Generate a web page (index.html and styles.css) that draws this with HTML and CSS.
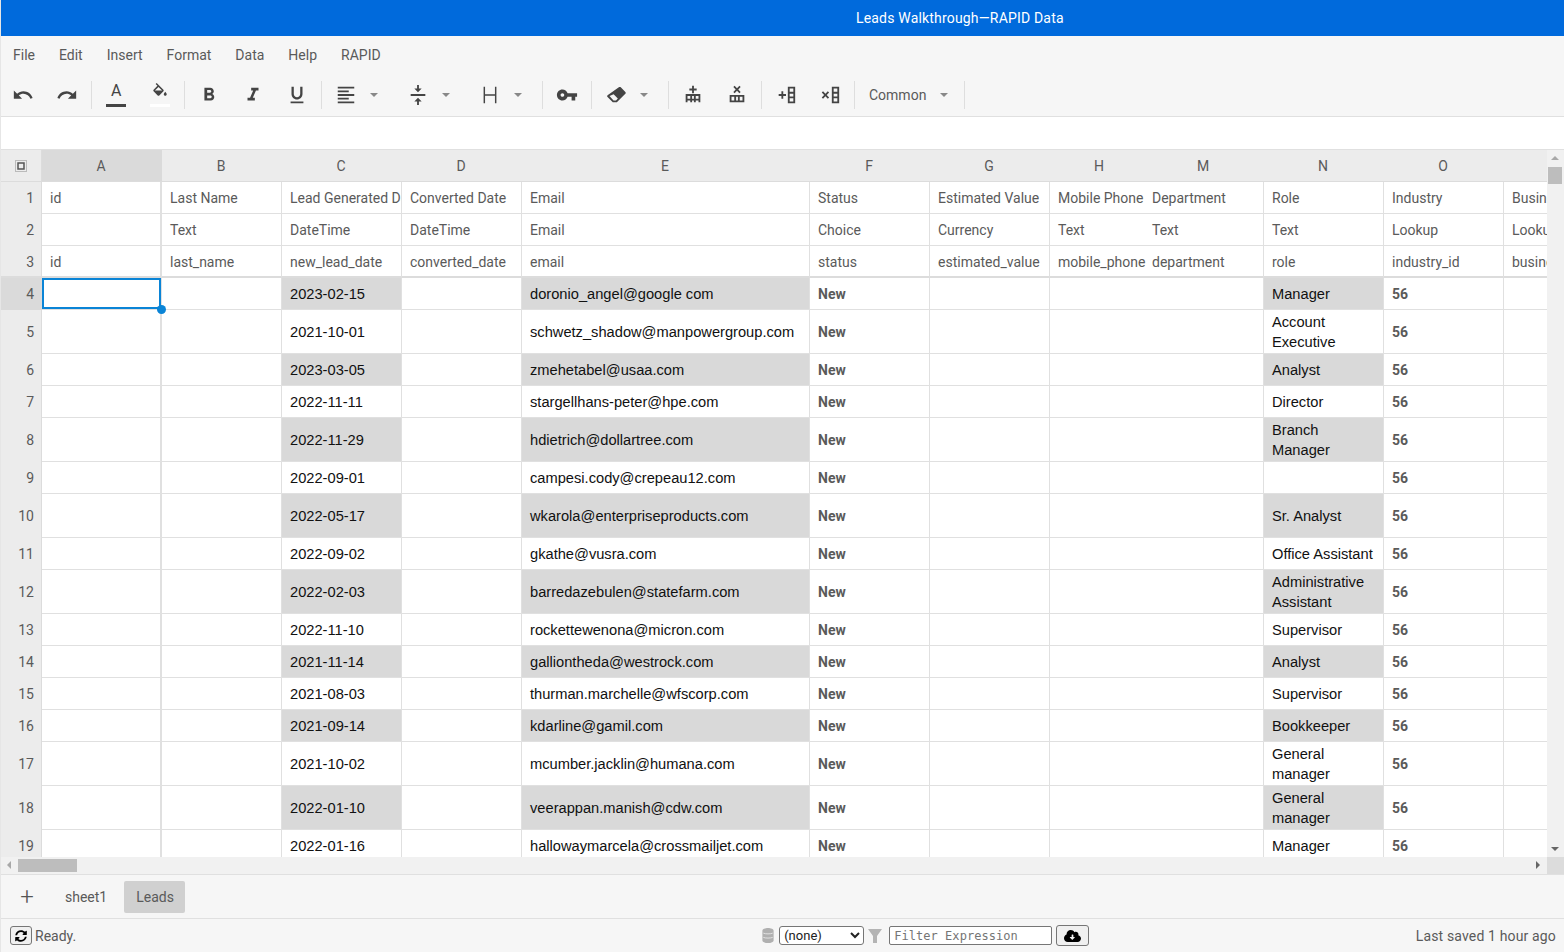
FILE: index.html
```html
<!DOCTYPE html>
<html lang="en">
<head>
  <meta charset="UTF-8">
  <title>Leads Walkthrough—RAPID Data</title>
  <link rel="stylesheet" href="styles.css">
</head>
<body>
  <div class="title-bar"><span class="title-text">Leads Walkthrough—RAPID Data</span></div>

  <div class="menu-bar">
    <span>File</span><span>Edit</span><span>Insert</span><span>Format</span><span>Data</span><span>Help</span><span>RAPID</span>
  </div>

  <div class="toolbar">
    <div class="tool"><svg viewBox="0 0 24 24"><path d="M12.5 8c-2.65 0-5.05.99-6.9 2.6L2 7v9h9l-3.62-3.62c1.39-1.16 3.16-1.88 5.12-1.88 3.54 0 6.55 2.31 7.6 5.5l2.37-.78C21.08 11.03 17.15 8 12.5 8z"/></svg></div>
    <div class="tool"><svg viewBox="0 0 24 24"><path d="M18.4 10.6C16.55 8.99 14.15 8 11.5 8c-4.65 0-8.58 3.03-9.96 7.22L3.9 16c1.05-3.19 4.05-5.5 7.6-5.5 1.95 0 3.73.72 5.12 1.88L13 16h9V7l-3.6 3.6z"/></svg></div>
    <div class="sep"></div>
    <div class="tool"><span class="color-a">A</span><span class="swatch dark"></span></div>
    <div class="tool"><svg class="fill-icon" viewBox="0 0 24 24"><path d="M16.56 8.94L7.62 0 6.21 1.41l2.38 2.38-5.15 5.15c-.59.59-.59 1.54 0 2.12l5.5 5.5c.29.29.68.44 1.06.44s.77-.15 1.06-.44l5.5-5.5c.59-.58.59-1.53 0-2.12zM5.21 10L10 5.21 14.79 10H5.21zM19 11.5s-2 2.17-2 3.5c0 1.1.9 2 2 2s2-.9 2-2c0-1.33-2-3.5-2-3.5z"/></svg><span class="swatch light"></span></div>
    <div class="sep"></div>
    <div class="tool"><svg viewBox="0 0 24 24"><path d="M15.6 10.79c.97-.67 1.65-1.77 1.65-2.79 0-2.26-1.75-4-4-4H7v14h7.04c2.09 0 3.71-1.7 3.71-3.79 0-1.52-.86-2.82-2.15-3.42zM10 6.5h3c.83 0 1.5.67 1.5 1.5s-.67 1.5-1.5 1.5h-3v-3zm3.5 9H10v-3h3.5c.83 0 1.5.67 1.5 1.5s-.67 1.5-1.5 1.5z"/></svg></div>
    <div class="tool"><svg viewBox="0 0 24 24"><path d="M10 4v3h2.21l-3.42 8H6v3h8v-3h-2.21l3.42-8H18V4z"/></svg></div>
    <div class="tool"><svg viewBox="0 0 24 24"><path d="M12 17c3.31 0 6-2.69 6-6V3h-2.5v8c0 1.93-1.57 3.5-3.5 3.5S8.5 12.93 8.5 11V3H6v8c0 3.31 2.69 6 6 6zm-7 2v2h14v-2H5z"/></svg></div>
    <div class="sep"></div>
    <div class="tool wide"><svg viewBox="0 0 24 24"><path d="M15 15H3v2h12v-2zm0-8H3v2h12V7zM3 13h18v-2H3v2zm0 8h18v-2H3v2zM3 3v2h18V3H3z"/></svg><i class="caret"></i></div>
    <div class="tool wide"><svg viewBox="0 0 24 24"><path d="M8 19h3v4h2v-4h3l-4-4-4 4zm8-14h-3V1h-2v4H8l4 4 4-4zM4 11v2h16v-2H4z"/></svg><i class="caret"></i></div>
    <div class="tool wide"><svg viewBox="0 0 24 24"><path d="M5 3h1.600v18H5zM17.400 3H19v18h-1.600zM6.600 11.200h10.800v1.600H6.600z"/></svg><i class="caret"></i></div>
    <div class="sep"></div>
    <div class="tool"><svg viewBox="0 0 24 24"><path d="M12.65 10C11.83 7.67 9.61 6 7 6c-3.31 0-6 2.69-6 6s2.69 6 6 6c2.61 0 4.83-1.67 5.65-4H17v4h4v-4h2v-4H12.65zM7 14c-1.1 0-2-.9-2-2s.9-2 2-2 2 .9 2 2-.9 2-2 2z"/></svg></div>
    <div class="sep"></div>
    <div class="tool wide"><svg viewBox="0 0 24 24"><path d="M15.1 3.6c.6-.6 1.5-.6 2.1 0l5 5c.6.6.6 1.5 0 2.1L12.9 20H8.5l-5.7-5.7c-.6-.6-.6-1.5 0-2.1L15.1 3.6zM4.900 13.200l4.400 4.700h2.700l2-2-4.600-4.600-4.500 1.900z"/></svg><i class="caret"></i></div>
    <div class="sep"></div>
    <div class="tool"><svg viewBox="0 0 24 24"><path d="M11 2h2v3h3v2h-3v3h-2V7H8V5h3zM4 11h16v9h-2v-2h-3v2h-2v-2h-2v2H9v-2H6v2H4zm2 2v3h3v-3zm5 0v3h2v-3zm4 0v3h3v-3z"/></svg></div>
    <div class="tool"><svg viewBox="0 0 24 24"><path d="M9.400 2L12 4.600 14.600 2 16 3.400 13.400 6 16 8.600 14.600 10 12 7.400 9.400 10 8 8.600 10.600 6 8 3.400zM4 12h16v8H4zm2 2v4h3v-4zm5 0v4h2v-4zm4 0v4h3v-4z"/></svg></div>
    <div class="sep"></div>
    <div class="tool"><svg viewBox="0 0 24 24"><path d="M4 11h3V8h2v3h3v2H9v3H7v-3H4zM14 3h8v18h-8zm2 2v3.500h4V5zm0 5.500v3h4v-3zm0 5V19h4v-3.500z"/></svg></div>
    <div class="tool"><svg viewBox="0 0 24 24"><path d="M4.400 8L7 10.600 9.600 8 11 9.400 8.400 12l2.600 2.600L9.600 16 7 13.400 4.400 16 3 14.600 5.600 12 3 9.400zM14 3h8v18h-8zm2 2v3.500h4V5zm0 5.500v3h4v-3zm0 5V19h4v-3.500z"/></svg></div>
    <div class="sep"></div>
    <div class="tool style-picker"><span>Common</span><i class="caret"></i></div>
    <div class="sep"></div>
  </div>

  <div class="formula-bar"></div>

  <div class="sheet-area">
    <div class="grid-wrap">
      <table class="grid">
        <colgroup>
          <col class="c-head"><col class="c-std"><col class="c-std"><col class="c-std"><col class="c-std"><col class="c-email"><col class="c-std"><col class="c-std"><col class="c-phone"><col class="c-std"><col class="c-std"><col class="c-std"><col class="c-std">
        </colgroup>
        <tr class="col-heads">
          <th class="corner"><svg viewBox="0 0 14 14"><rect x="1.500" y="1.500" width="11" height="11" fill="none" stroke="#8a8a8a" stroke-dasharray="1 1"/><rect x="4" y="4" width="6" height="6" fill="none" stroke="#555" stroke-width="1.500"/></svg></th>
          <th class="active-head">A</th><th>B</th><th>C</th><th>D</th><th>E</th><th>F</th><th>G</th><th class="nudge">H</th><th>M</th><th>N</th><th>O</th><th></th>
        </tr>
        <tr class="meta"><th>1</th><td class="thick">id</td><td>Last Name</td><td>Lead Generated Date</td><td>Converted Date</td><td>Email</td><td>Status</td><td>Estimated Value</td><td class="open">Mobile Phone</td><td>Department</td><td>Role</td><td>Industry</td><td>Business Unit</td></tr>
        <tr class="meta"><th>2</th><td class="thick"></td><td>Text</td><td>DateTime</td><td>DateTime</td><td>Email</td><td>Choice</td><td>Currency</td><td class="open">Text</td><td>Text</td><td>Text</td><td>Lookup</td><td>Lookup</td></tr>
        <tr class="meta last-meta"><th>3</th><td class="thick">id</td><td>last_name</td><td>new_lead_date</td><td>converted_date</td><td>email</td><td>status</td><td>estimated_value</td><td class="open">mobile_phone</td><td>department</td><td>role</td><td>industry_id</td><td>business_unit</td></tr>
        <tr class="alt"><th class="active-head">4</th><td class="thick"><div class="selected"><i class="handle"></i></div></td><td></td><td class="val sh">2023-02-15</td><td></td><td class="val sh">doronio_angel@google com</td><td class="tag">New</td><td></td><td class="open"></td><td></td><td class="val sh">Manager</td><td class="tag">56</td><td></td></tr>
        <tr class="tall"><th>5</th><td class="thick"></td><td></td><td class="val">2021-10-01</td><td></td><td class="val">schwetz_shadow@manpowergroup.com</td><td class="tag">New</td><td></td><td class="open"></td><td></td><td class="val wrap">Account Executive</td><td class="tag">56</td><td></td></tr>
        <tr><th>6</th><td class="thick"></td><td></td><td class="val sh">2023-03-05</td><td></td><td class="val sh">zmehetabel@usaa.com</td><td class="tag">New</td><td></td><td class="open"></td><td></td><td class="val sh">Analyst</td><td class="tag">56</td><td></td></tr>
        <tr><th>7</th><td class="thick"></td><td></td><td class="val">2022-11-11</td><td></td><td class="val">stargellhans-peter@hpe.com</td><td class="tag">New</td><td></td><td class="open"></td><td></td><td class="val">Director</td><td class="tag">56</td><td></td></tr>
        <tr class="tall"><th>8</th><td class="thick"></td><td></td><td class="val sh">2022-11-29</td><td></td><td class="val sh">hdietrich@dollartree.com</td><td class="tag">New</td><td></td><td class="open"></td><td></td><td class="val sh wrap">Branch Manager</td><td class="tag">56</td><td></td></tr>
        <tr><th>9</th><td class="thick"></td><td></td><td class="val">2022-09-01</td><td></td><td class="val">campesi.cody@crepeau12.com</td><td class="tag">New</td><td></td><td class="open"></td><td></td><td class="val"></td><td class="tag">56</td><td></td></tr>
        <tr class="tall"><th>10</th><td class="thick"></td><td></td><td class="val sh">2022-05-17</td><td></td><td class="val sh">wkarola@enterpriseproducts.com</td><td class="tag">New</td><td></td><td class="open"></td><td></td><td class="val sh">Sr. Analyst</td><td class="tag">56</td><td></td></tr>
        <tr><th>11</th><td class="thick"></td><td></td><td class="val">2022-09-02</td><td></td><td class="val">gkathe@vusra.com</td><td class="tag">New</td><td></td><td class="open"></td><td></td><td class="val">Office Assistant</td><td class="tag">56</td><td></td></tr>
        <tr class="tall"><th>12</th><td class="thick"></td><td></td><td class="val sh">2022-02-03</td><td></td><td class="val sh">barredazebulen@statefarm.com</td><td class="tag">New</td><td></td><td class="open"></td><td></td><td class="val sh wrap">Administrative Assistant</td><td class="tag">56</td><td></td></tr>
        <tr><th>13</th><td class="thick"></td><td></td><td class="val">2022-11-10</td><td></td><td class="val">rockettewenona@micron.com</td><td class="tag">New</td><td></td><td class="open"></td><td></td><td class="val">Supervisor</td><td class="tag">56</td><td></td></tr>
        <tr><th>14</th><td class="thick"></td><td></td><td class="val sh">2021-11-14</td><td></td><td class="val sh">galliontheda@westrock.com</td><td class="tag">New</td><td></td><td class="open"></td><td></td><td class="val sh">Analyst</td><td class="tag">56</td><td></td></tr>
        <tr><th>15</th><td class="thick"></td><td></td><td class="val">2021-08-03</td><td></td><td class="val">thurman.marchelle@wfscorp.com</td><td class="tag">New</td><td></td><td class="open"></td><td></td><td class="val">Supervisor</td><td class="tag">56</td><td></td></tr>
        <tr><th>16</th><td class="thick"></td><td></td><td class="val sh">2021-09-14</td><td></td><td class="val sh">kdarline@gamil.com</td><td class="tag">New</td><td></td><td class="open"></td><td></td><td class="val sh">Bookkeeper</td><td class="tag">56</td><td></td></tr>
        <tr class="tall"><th>17</th><td class="thick"></td><td></td><td class="val">2021-10-02</td><td></td><td class="val">mcumber.jacklin@humana.com</td><td class="tag">New</td><td></td><td class="open"></td><td></td><td class="val wrap">General manager</td><td class="tag">56</td><td></td></tr>
        <tr class="tall"><th>18</th><td class="thick"></td><td></td><td class="val sh">2022-01-10</td><td></td><td class="val sh">veerappan.manish@cdw.com</td><td class="tag">New</td><td></td><td class="open"></td><td></td><td class="val sh wrap">General manager</td><td class="tag">56</td><td></td></tr>
        <tr><th>19</th><td class="thick"></td><td></td><td class="val">2022-01-16</td><td></td><td class="val">hallowaymarcela@crossmailjet.com</td><td class="tag">New</td><td></td><td class="open"></td><td></td><td class="val">Manager</td><td class="tag">56</td><td></td></tr>
      </table>
      <div class="vscroll">
        <i class="arrow up"></i>
        <div class="vthumb"></div>
        <i class="arrow down"></i>
      </div>
    </div>
    <div class="hscroll">
      <i class="arrow left"></i>
      <div class="hthumb"></div>
      <i class="arrow right"></i>
      <div class="scroll-corner"></div>
    </div>
  </div>

  <div class="tab-bar">
    <span class="add-tab">+</span>
    <span class="tab">sheet1</span>
    <span class="tab active">Leads</span>
  </div>

  <div class="status-bar">
    <button class="refresh"><svg viewBox="0 0 512 512"><path d="M370.700 133.300C339.500 104 298.900 88 255.800 88c-77.500.1-144.300 53.200-162.800 126.900-1.300 5.400-6.100 9.200-11.700 9.200H24.100c-7.500 0-13.200-6.800-11.800-14.200C33.900 94.900 134.800 8 256 8c66.400 0 126.800 26.100 171.300 68.700L463 41c15.100-15.100 41-4.400 41 17v134c0 13.300-10.700 24-24 24H346c-21.400 0-32.100-25.900-17-41l41.700-41.700zM32 296h134c21.400 0 32.100 25.900 17 41l-41.700 41.700c31.200 29.300 71.800 45.300 114.900 45.300 77.400-.1 144.300-53.100 162.800-126.800 1.300-5.400 6.100-9.200 11.700-9.200h57.300c7.500 0 13.200 6.800 11.800 14.200C478.100 417.100 377.200 504 256 504c-66.400 0-126.800-26.100-171.300-68.700L49 471c-15.100 15.100-41 4.400-41-17V320c0-13.300 10.700-24 24-24z"/></svg></button>
    <span class="ready">Ready.</span>
    <div class="data-tools">
      <svg class="db" viewBox="0 0 12 16"><path d="M0 3c0-2 3-3 6-3s6 1 6 3v10c0 2-3 3-6 3s-6-1-6-3z" fill="#b0b0b0"/><path d="M1 5.500c2 1 8 1 10 0M1 10c2 1 8 1 10 0" fill="none" stroke="#e4e4e4"/></svg>
      <select class="source"><option>(none)</option></select>
      <svg class="funnel" viewBox="0 0 14 14"><path d="M0 0h14L9 7v7H5V7z" fill="#b4b4b4"/></svg>
      <input class="filter" placeholder="Filter Expression">
      <button class="fetch"><svg viewBox="0 0 640 512"><path d="M537.600 226.600c4.100-10.700 6.400-22.400 6.400-34.600 0-53-43-96-96-96-19.700 0-38.100 6-53.300 16.200C367 64.200 315.300 32 256 32c-88.400 0-160 71.600-160 160 0 2.700.1 5.400.2 8.100C40.200 219.800 0 273.200 0 336c0 79.500 64.500 144 144 144h368c70.700 0 128-57.300 128-128 0-61.900-44-113.600-102.400-125.400zM404.700 316.700l-84 84c-4.500 4.500-12 4.500-16.500 0l-84-84c-7.300-7.300-2.200-20 8.300-20H288V216c0-8.800 7.200-16 16-16h32c8.800 0 16 7.200 16 16v80.700h44.400c10.600 0 15.700 12.700 8.300 20z"/></svg></button>
    </div>
    <span class="saved">Last saved 1 hour ago</span>
  </div>
</body>
</html>
```

FILE: styles.css
```css
* {
  margin: 0;
  padding: 0;
  box-sizing: border-box;
}

html, body {
  height: 100%;
}

body {
  font-family: Roboto, 'Liberation Sans', sans-serif;
  font-size: 14px;
  color: #5a5a5a;
  background: #f6f6f6;
  display: flex;
  flex-direction: column;
  overflow: hidden;
  border-left: 1px solid #e6e6e6;
}

/* Top bars */
.title-bar {
  height: 36px;
  margin-left: -1px;
  background: #006adc;
  color: #fff;
  display: flex;
  align-items: center;
  flex: none;
}

.title-text {
  margin-left: 856px;
  letter-spacing: .18px;
}

.menu-bar {
  height: 36px;
  flex: none;
  display: flex;
  align-items: center;
  gap: 24px;
  padding: 2px 0 0 12px;
}

.toolbar {
  height: 45px;
  flex: none;
  display: flex;
  align-items: center;
  padding-top: 2px;
  border-bottom: 1px solid #e0e0e0;
}

.tool {
  width: 44px;
  height: 28px;
  flex: none;
  display: flex;
  align-items: center;
  position: relative;
  padding-left: 12px;
}

.tool.wide {
  width: 72px;
}

.tool svg {
  width: 22px;
  height: 22px;
  margin-left: -1px;
  fill: #444;
}

.tool svg.fill-icon {
  width: 18px;
  height: 18px;
  margin: -7px 0 0 1px;
}

.caret {
  display: block;
  width: 0;
  height: 0;
  margin-left: 13px;
  border-left: 4px solid transparent;
  border-right: 4px solid transparent;
  border-top: 4px solid #888;
}

.sep {
  width: 1px;
  height: 28px;
  margin: 0 2px;
  background: #dedede;
  flex: none;
}

.color-a {
  font-size: 16px;
  line-height: 16px;
  margin: -9px 0 0 5px;
  color: #444;
}

.swatch {
  position: absolute;
  left: 12px;
  bottom: 2px;
  width: 20px;
  height: 3px;
}

.swatch.dark {
  background: #444;
}

.swatch.light {
  background: #fff;
}

.style-picker {
  width: 105px;
  padding-left: 12px;
}

.style-picker .caret {
  margin-left: 14px;
}

.formula-bar {
  height: 33px;
  flex: none;
  background: #fff;
  border-bottom: 1px solid #e0e0e0;
}

/* Sheet */
.sheet-area {
  flex: none;
  height: 725px;
  margin-left: -1px;
  display: flex;
  flex-direction: column;
  border-bottom: 1px solid #e0e0e0;
}

.grid-wrap {
  height: 707px;
  position: relative;
  overflow: hidden;
  background: #fff;
}

.grid {
  table-layout: fixed;
  width: 1622px;
  border-collapse: separate;
  border-spacing: 0;
  line-height: 20px;
}

.c-head { width: 42px; }
.c-std { width: 120px; }
.c-email { width: 288px; }
.c-phone { width: 94px; }

.grid th {
  font-weight: 400;
  background: #ececec;
  color: #5a5a5a;
}

.grid tr > th:first-child {
  text-align: right;
  padding-right: 7px;
  border-right: 1px solid #dcdcdc;
}

.col-heads th {
  height: 32px;
  padding-right: 2px;
  border-bottom: 1px solid #dcdcdc;
  text-align: center;
}

.grid .col-heads .corner {
  text-align: center;
  padding: 5px 0 0;
}

.corner svg {
  width: 14px;
  height: 14px;
}

.grid th.active-head {
  background: #dadada;
}

.col-heads .nudge {
  padding-left: 4px;
  padding-right: 0;
}

.grid td {
  height: 32px;
  padding: 0 8px;
  border-right: 1px solid #e0e0e0;
  border-bottom: 1px solid #e0e0e0;
  white-space: nowrap;
  overflow: hidden;
  vertical-align: middle;
  position: relative;
}

.grid td.thick {
  border-right-width: 2px;
}

.grid td.open {
  border-right: none;
  overflow: visible;
}

.last-meta td, .last-meta th {
  border-bottom: 2px solid #dcdcdc;
  padding-top: 1px;
}

.grid tr.tall td, .grid tr.tall th {
  height: 44px;
}

.grid td.val {
  font-family: 'Liberation Sans', Arial, sans-serif;
  font-size: 14.67px;
  color: #111;
}

.grid td.sh {
  background: #d9d9d9;
}

.grid td.tag {
  font-weight: 700;
  color: #5a5a5a;
}

.grid td.wrap {
  white-space: normal;
}

.grid td:has(.selected) {
  overflow: visible;
  padding: 0;
  z-index: 2;
}

.selected {
  position: absolute;
  left: 0;
  top: 0;
  right: -1px;
  bottom: 0;
  border: 2px solid #0a84d6;
}

.handle {
  position: absolute;
  right: -7px;
  bottom: -7px;
  width: 9px;
  height: 9px;
  border-radius: 50%;
  background: #0a84d6;
}

/* Scrollbars */
.vscroll {
  position: absolute;
  top: 0;
  right: 0;
  bottom: 0;
  width: 17px;
  background: #f1f1f1;
}

.vthumb {
  position: absolute;
  top: 17px;
  left: 1px;
  width: 14px;
  height: 17px;
  background: #bdbdbd;
}

.arrow {
  position: absolute;
  width: 0;
  height: 0;
  border: 4px solid transparent;
}

.arrow.up {
  top: 2px;
  left: 4px;
  border-bottom-color: #a8a8a8;
}

.arrow.down {
  bottom: 2px;
  left: 4px;
  border-top-color: #666;
}

.hscroll {
  height: 17px;
  position: relative;
  background: #f1f1f1;
  flex: none;
}

.hthumb {
  position: absolute;
  left: 18px;
  top: 2px;
  width: 59px;
  height: 13px;
  background: #bdbdbd;
}

.arrow.left {
  left: 3px;
  top: 4px;
  border-right-color: #a8a8a8;
}

.arrow.right {
  right: 20px;
  top: 4px;
  border-left-color: #666;
}

.scroll-corner {
  position: absolute;
  right: 0;
  top: 0;
  width: 17px;
  height: 17px;
  background: #dcdcdc;
}

/* Tabs */
.tab-bar {
  height: 44px;
  flex: none;
  display: flex;
  align-items: center;
  border-bottom: 1px solid #e0e0e0;
}

.add-tab {
  width: 52px;
  text-align: center;
  font-size: 24px;
  font-weight: 300;
  line-height: 32px;
  color: #555;
}

.tab {
  height: 32px;
  line-height: 32px;
  padding: 0 12px;
}

.tab.active {
  background: #d0d0d0;
  border-radius: 2px;
  margin-left: 5px;
  width: 61px;
}

/* Status */
.status-bar {
  flex: 1;
  display: flex;
  align-items: center;
  padding-left: 9px;
}

.refresh {
  width: 22px;
  height: 19px;
  background: #f0f0f0;
  border: 1px solid #767676;
  border-radius: 3px;
  display: flex;
  align-items: center;
  justify-content: center;
}

.refresh svg {
  width: 12px;
  height: 12px;
}

.ready {
  margin-left: 3px;
}

.data-tools {
  margin-left: 686px;
  display: flex;
  align-items: center;
}

.db {
  width: 12px;
  height: 15px;
}

.source {
  width: 85px;
  height: 19px;
  margin-left: 5px;
  font-family: Roboto, sans-serif;
  font-size: 13px;
  color: #222;
  background: #fff;
  border: 1px solid #767676;
  border-radius: 3px;
}

.funnel {
  width: 14px;
  height: 14px;
  margin-left: 4px;
}

.filter {
  width: 163px;
  height: 19px;
  margin-left: 7px;
  padding: 0 4px;
  font-family: 'DejaVu Sans Mono', monospace;
  font-size: 12px;
  letter-spacing: .05px;
  background: #fff;
  border: 1px solid #767676;
  border-radius: 2px;
}

.fetch {
  width: 33px;
  height: 21px;
  margin-left: 4px;
  background: #f0f0f0;
  border: 1px solid #767676;
  border-radius: 3px;
  display: flex;
  align-items: center;
  justify-content: center;
}

.fetch svg {
  width: 17px;
  height: 14px;
}

.saved {
  margin-left: auto;
  padding-right: 8px;
  letter-spacing: .15px;
}
```
